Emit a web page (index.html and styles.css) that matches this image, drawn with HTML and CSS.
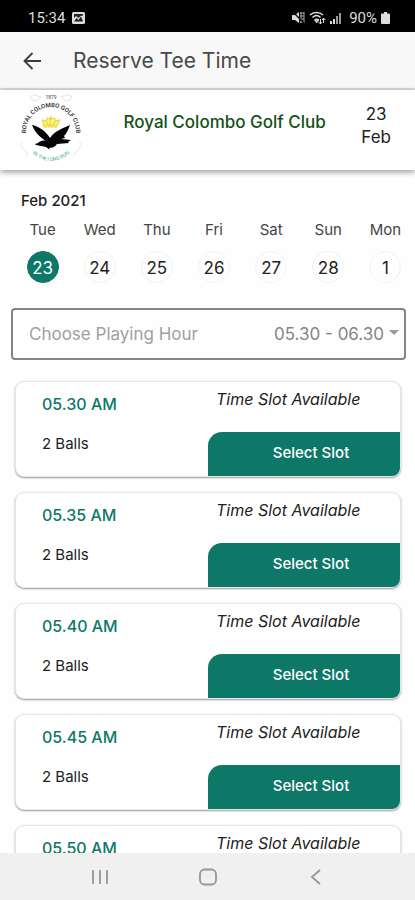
FILE: index.html
```html
<!DOCTYPE html>
<html lang="en">
<head>
<meta charset="utf-8">
<meta name="viewport" content="width=device-width, initial-scale=1">
<title>Reserve Tee Time</title>
<link rel="stylesheet" href="styles.css">
</head>
<body>
<div class="status">
  <span class="status-time">15:34</span>
  <svg width="13" height="12" viewBox="0 0 13 12"><rect width="13" height="12" rx="1.5" fill="#ddd"/><path d="M2 9.5 4.5 6 6.5 8 9 4.500 11 9.500zM2 2h9v1.500L8.500 4 6.500 6 4 4 2 6z" fill="#222"/></svg>
  <span class="status-icons">
    <svg width="13" height="13" viewBox="0 0 13 13"><path d="M0 4h3l4-3v11L3 9H0z" fill="#ddd"/><path d="M8 2h4M8 5h4M8 8h4M8 11h4M9 1v11M12 1v11" stroke="#aaa" stroke-width="1" fill="none"/><path d="M1 1l11 11" stroke="#111" stroke-width="1.500"/></svg>
    <svg width="17" height="13" viewBox="0 0 17 13"><path d="M1 4C4.500 .5 10.500 .5 14 4M3.500 6.500c2.500-2.400 5.500-2.400 8 0M6 9c1-1 2.500-1 3.500 0L7.700 11z" fill="none" stroke="#ddd" stroke-width="1.500"/><path d="M11.500 8v5M9.500 11l2 2 1-2M14.500 12V7l-1.500 2M14.500 7l2 2" fill="none" stroke="#ddd"/></svg>
    <svg width="12" height="12" viewBox="0 0 12 12"><path d="M0 9h2v3H0zM3 7h2v5H3z" fill="#ddd"/><path d="M6 4h2v8H6zM9 1h2v11H9z" fill="#999"/></svg>
  </span>
  <span class="status-battery">90%</span>
  <svg width="9" height="12" viewBox="0 0 9 12"><path d="M3 0h3v1.500h2q1 0 1 1V11q0 1-1 1H1q-1 0-1-1V2.500q0-1 1-1h2z" fill="#ddd"/></svg>
</div>

<header class="appbar">
  <button class="back" type="button" aria-label="Back">
    <svg width="20" height="20" viewBox="0 0 20 20" fill="none" stroke="#3c3c3c" stroke-width="1.800"><path d="M18 10H2M9.500 2 1.500 10l8 8"/></svg>
  </button>
  <h1>Reserve Tee Time</h1>
</header>

<section class="club">
  <svg class="crest" width="64" height="76" viewBox="0 0 64 76" role="img" aria-label="Royal Colombo Golf Club crest">
    <path id="ring" d="M8 47A25 25 0 1 1 56 47" fill="none"/>
    <path id="motto" d="M12 60Q32 78 52 60" fill="none"/>
    <path d="M13 8q-4-5 3-5l6 2-5 4zM51 8q4-5-3-5l-6 2 5 4zM4 50q-4 2-1 5l6 8M60 50q4 2 1 5l-6 8" fill="none" stroke="#e4e4e4"/>
    <text x="32" y="7" class="crest-year">1879</text>
    <text class="crest-name"><textPath href="#ring" startOffset="50%">ROYAL COLOMBO GOLF CLUB</textPath></text>
    <text class="crest-motto"><textPath href="#motto" startOffset="50%">IN THE LONG RUN</textPath></text>
    <path d="M25 35 23.500 28l4 1 1-3 3 1 .5-3 .5 3 3-1 1 3 4-1L37.500 35zM25 33h12M31 26v8M27 30l3 4M36 30l-3 4" fill="#fbf291" stroke="#e8d93a" stroke-width="1.200"/>
    <path d="M13 33c6 1 14 6 18 13 5-7 11-9 20-13-2 5-3 8-6 11l1 2-4 1 10 1-3 2 1 1-12 1c-2 3-5 4-8 4l1 2-4-3-10-2-1-1 3-1c2-2 5-3 8-2C21 45 16 41 13 33z" fill="#050505"/>
  </svg>
  <h2>Royal Colombo Golf Club</h2>
  <p class="club-date">23<br>Feb</p>
</section>

<main>
  <h3 class="month">Feb 2021</h3>
  <div class="days">
    <button class="day selected" type="button"><span>Tue</span><b>23</b></button>
    <button class="day" type="button"><span>Wed</span><b>24</b></button>
    <button class="day" type="button"><span>Thu</span><b>25</b></button>
    <button class="day" type="button"><span>Fri</span><b>26</b></button>
    <button class="day" type="button"><span>Sat</span><b>27</b></button>
    <button class="day" type="button"><span>Sun</span><b>28</b></button>
    <button class="day" type="button"><span>Mon</span><b>1</b></button>
  </div>

  <div class="hour">
    <label for="hour">Choose Playing Hour</label>
    <select id="hour"><option>05.30 - 06.30</option></select>
    <svg width="10" height="10" viewBox="0 0 10 10"><path d="M0 1h10L5 6z" fill="#999"/></svg>
  </div>

  <div class="slots">
    <article class="slot"><div class="info"><h4>05.30 AM</h4><p>2 Balls</p></div><div class="action"><em>Time Slot Available</em><button type="button">Select Slot</button></div></article>
    <article class="slot"><div class="info"><h4>05.35 AM</h4><p>2 Balls</p></div><div class="action"><em>Time Slot Available</em><button type="button">Select Slot</button></div></article>
    <article class="slot"><div class="info"><h4>05.40 AM</h4><p>2 Balls</p></div><div class="action"><em>Time Slot Available</em><button type="button">Select Slot</button></div></article>
    <article class="slot"><div class="info"><h4>05.45 AM</h4><p>2 Balls</p></div><div class="action"><em>Time Slot Available</em><button type="button">Select Slot</button></div></article>
    <article class="slot"><div class="info"><h4>05.50 AM</h4><p>2 Balls</p></div><div class="action"><em>Time Slot Available</em><button type="button">Select Slot</button></div></article>
  </div>
</main>

<nav class="softkeys">
  <button type="button" aria-label="Recent apps"><svg width="18" height="18" viewBox="0 0 18 18" stroke="#969696" stroke-width="1.800"><path d="M2 2v14M9 2v14M16 2v14"/></svg></button>
  <button type="button" aria-label="Home"><svg width="18" height="18" viewBox="0 0 18 18" fill="none" stroke="#969696" stroke-width="1.800"><rect x="1" y="1.500" width="16" height="15" rx="4.500"/></svg></button>
  <button type="button" aria-label="Back"><svg width="18" height="18" viewBox="0 0 18 18" fill="none" stroke="#969696" stroke-width="1.800"><path d="M13 2 5 9l8 7"/></svg></button>
</nav>
</body>
</html>
```
FILE: styles.css
```css
* {
  box-sizing: border-box;
}

body {
  display: flex;
  flex-direction: column;
  height: 100vh;
  margin: 0;
  overflow: hidden;
  background: #fefefe;
  color: #222;
  font-family: Inter, Roboto, sans-serif;
}

h1, h2, h3, h4, p {
  margin: 0;
}

button {
  padding: 0;
  border: 0;
  background: none;
  color: inherit;
  font: inherit;
}

svg {
  display: block;
}

.status {
  display: flex;
  flex: none;
  align-items: center;
  height: 32px;
  padding: 3px 25px 0 28px;
  background: #000;
  color: #ddd;
  font: 15px/20px Roboto, sans-serif;
}

.status-time {
  margin-right: 7px;
}

.status-icons {
  display: flex;
  align-items: center;
  gap: 4px;
  margin-left: auto;
}

.status-battery {
  margin: 0 4px 0 7px;
}

.appbar {
  display: flex;
  flex: none;
  align-items: center;
  gap: 30px;
  height: 58px;
  padding: 2px 0 0 23px;
  border-bottom: 2px solid #dcdcdc;
  background: #f8f8f8;
}

.appbar h1 {
  color: #484848;
  font-size: 21px;
  font-weight: 400;
  line-height: 28px;
}

.club {
  position: relative;
  display: flex;
  flex: none;
  align-items: center;
  height: 80px;
  padding: 0 24px 0 19px;
  background: #fff;
  box-shadow: 0 2px 6px rgba(0, 0, 0, 0.4);
}

.club h2 {
  flex: 1;
  padding: 0 0 16px 5px;
  color: #145214;
  font-size: 17px;
  font-weight: 500;
  line-height: 24px;
  text-align: center;
  white-space: nowrap;
}

.club-date {
  padding-bottom: 9px;
  font-size: 17px;
  line-height: 23px;
  text-align: center;
}

.crest text {
  font-family: Roboto, sans-serif;
  text-anchor: middle;
}

.crest .crest-year {
  fill: #444;
  font-size: 5px;
}

.crest .crest-name {
  fill: #222;
  font-size: 6px;
  font-weight: 500;
}

.crest .crest-motto {
  fill: #36aa92;
  font-size: 5px;
}

main {
  flex: 1;
  min-height: 0;
  overflow: hidden;
  padding-top: 21px;
}

.month {
  padding-left: 21px;
  font-size: 15px;
  font-weight: 500;
  line-height: 20px;
}

.days {
  display: grid;
  grid-template-columns: repeat(7, 1fr);
  padding: 9px 1px 0 14px;
}

.day {
  display: flex;
  flex-direction: column;
  align-items: center;
  gap: 11px;
}

.day span {
  color: #444;
  font-size: 15px;
  line-height: 20px;
}

.day b {
  width: 32px;
  height: 32px;
  border: 1px solid #f2f2f2;
  border-radius: 50%;
  font-size: 17px;
  font-weight: 400;
  line-height: 32px;
  text-align: center;
}

.day.selected b {
  border-color: #0e7868;
  background: #0e7868;
  color: #fff;
}

.hour {
  display: flex;
  align-items: center;
  height: 52px;
  margin: 25px 9px 0 11px;
  padding: 0 5px 0 16px;
  border: 2px solid #858585;
  border-radius: 4px;
  color: #a0a0a0;
  font-size: 17px;
}

.hour select {
  flex: 1;
  min-width: 0;
  margin-right: 5px;
  padding: 0;
  border: 0;
  appearance: none;
  background: none;
  color: #858585;
  font: inherit;
  text-align-last: right;
}

.slots {
  display: grid;
  gap: 15px;
  padding: 21px 14px 0 15px;
}

.slot {
  display: grid;
  grid-template-columns: 1fr 1fr;
  height: 96px;
  overflow: hidden;
  border: 1px solid #e6e6e6;
  border-radius: 9px;
  background: #fff;
  box-shadow: 0 1px 2px rgba(0, 0, 0, 0.4);
}

.info {
  padding: 12px 0 0 26px;
  font-size: 15px;
  line-height: 20px;
}

.info h4 {
  margin-bottom: 20px;
  color: #0e7868;
  font-size: 16px;
  font-weight: 500;
}

.action {
  display: flex;
  flex-direction: column;
  justify-content: space-between;
}

.action em {
  padding: 7px 0 0 8px;
  font-size: 16px;
  line-height: 20px;
}

.action button {
  height: 44px;
  padding: 0 0 3px 14px;
  border-radius: 14px 0 0 0;
  background: #0e7868;
  color: #fff;
  font-size: 15px;
  font-weight: 500;
}

.softkeys {
  display: flex;
  flex: none;
  justify-content: space-between;
  align-items: center;
  height: 47px;
  padding: 0 90px 0 91px;
  background: #f0f0f0;
}
```
